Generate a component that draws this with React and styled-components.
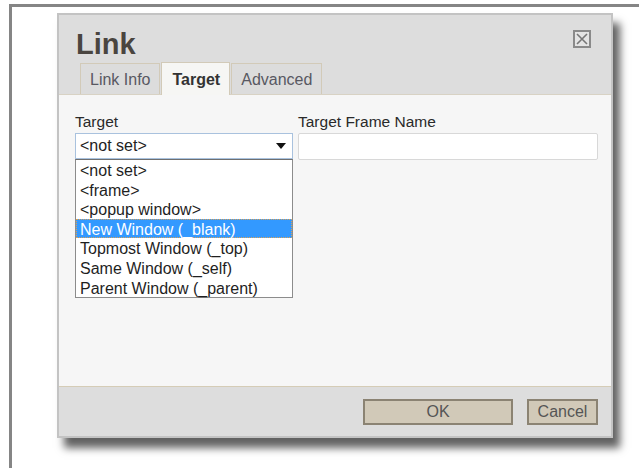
import React from 'react';
import styled, { createGlobalStyle } from 'styled-components';

const GlobalStyle = createGlobalStyle`
    html, body {
        margin: 0;
        padding: 0;
        background: #ffffff;
        overflow: hidden;
    }

    body {
        font-family: 'Liberation Sans', Arial, sans-serif;
    }
`;

const Frame = styled.div`
    margin: 4px 0 0 9px;
    height: 470px;
    border-top: 3px solid #858585;
    border-left: 3px solid #858585;
    padding: 6px 0 0 45px;
    box-sizing: border-box;
`;

const Dialog = styled.div`
    width: 556px;
    height: 425px;
    box-sizing: border-box;
    border: 2px solid #c3c3c3;
    background: #dddddd;
    display: flex;
    flex-direction: column;
    box-shadow: 7px 10px 8px rgba(0, 0, 0, 0.62);
`;

const Header = styled.div`
    display: flex;
    justify-content: space-between;
    align-items: flex-start;
    padding: 12px 20px 0 17px;
    height: 34px;
`;

const Title = styled.h1`
    margin: 0;
    font-size: 29px;
    font-weight: bold;
    line-height: 34px;
    color: #4a4540;
`;

const CloseBox = styled.button`
    width: 18px;
    height: 18px;
    margin-top: 3px;
    padding: 0;
    border: 2px solid #8a8a8a;
    background: #e4e4e4;
    display: flex;
    align-items: center;
    justify-content: center;
    box-sizing: border-box;
    cursor: pointer;
`;

const TabStrip = styled.div`
    display: flex;
    align-items: flex-end;
    gap: 1px;
    padding-left: 21px;
    height: 33px;
`;

const Tab = styled.div`
    height: ${(p) => (p.$active ? 33 : 31)}px;
    box-sizing: border-box;
    padding: 0 9px 0 ${(p) => (p.$active ? 10 : 9)}px;
    border: 1px solid #d2cab8;
    border-bottom: none;
    background: ${(p) => (p.$active ? '#f6f6f4' : '#dcdcdc')};
    color: ${(p) => (p.$active ? '#333333' : '#585862')};
    font-size: 16px;
    font-weight: ${(p) => (p.$active ? 'bold' : 'normal')};
    line-height: ${(p) => (p.$active ? 33 : 31)}px;
    margin-bottom: ${(p) => (p.$active ? -1 : 0)}px;
    position: relative;
`;

const Body = styled.div`
    flex: 1;
    background: #f6f6f6;
    border-top: 1px solid #d8d2c4;
    padding: 17px 14px 0 16px;
    display: grid;
    grid-template-columns: 218px 300px;
    column-gap: 5px;
    align-content: start;
`;

const Field = styled.div`
    display: flex;
    flex-direction: column;
`;

const Label = styled.label`
    font-size: 15.5px;
    line-height: 19px;
    color: #2a2a2a;
    margin-bottom: 2px;
`;

const SelectBox = styled.div`
    height: 26px;
    box-sizing: border-box;
    border: 1px solid #a9c2de;
    background: #ffffff;
    display: flex;
    align-items: center;
    justify-content: space-between;
    padding: 0 6px 0 4px;
    font-size: 16px;
    color: #222222;
`;

const TextInput = styled.input`
    height: 27px;
    box-sizing: border-box;
    border: 1px solid #d8d8d8;
    border-radius: 2px;
    background: #ffffff;
    font: inherit;
    margin: 0;
`;

const OptionList = styled.ul`
    list-style: none;
    margin: 0;
    padding: 0;
    border: 1px solid #8c8c8c;
    border-top-color: #6f6f6f;
    background: #ffffff;
`;

const Option = styled.li`
    height: 19.6px;
    box-sizing: border-box;
    padding: 0 3px;
    font-size: 16px;
    line-height: 19px;
    color: ${(p) => (p.$selected ? '#ffffff' : '#1f1f1f')};
    background: ${(p) => (p.$selected ? '#3399ff' : 'transparent')};
    border: 1px ${(p) => (p.$selected ? 'dotted #d9a25a' : 'solid transparent')};
    white-space: nowrap;
`;

const Footer = styled.div`
    height: 50px;
    box-sizing: border-box;
    border-top: 1px solid #d5ccb6;
    display: flex;
    justify-content: flex-end;
    align-items: flex-start;
    gap: 14px;
    padding: 12px 13px 0 0;
`;

const Button = styled.button`
    width: ${(p) => p.$width}px;
    height: 26px;
    box-sizing: border-box;
    border: 2px solid #8b8373;
    background: #d1c9b8;
    color: #555555;
    font-family: 'Liberation Sans', Arial, sans-serif;
    font-size: 16px;
    padding: 0;
    cursor: pointer;
`;

const targets = [
    '<not set>',
    '<frame>',
    '<popup window>',
    'New Window (_blank)',
    'Topmost Window (_top)',
    'Same Window (_self)',
    'Parent Window (_parent)',
];

const App = () => {
    return (
        <>
            <GlobalStyle />
            <Frame>
                <Dialog>
                    <Header>
                        <Title>Link</Title>
                        <CloseBox aria-label="Close">
                            <svg width="12" height="12" viewBox="0 0 12 12">
                                <path
                                    d="M1 1 L11 11 M11 1 L1 11"
                                    stroke="#777"
                                    strokeWidth="1.6"
                                />
                            </svg>
                        </CloseBox>
                    </Header>
                    <TabStrip>
                        <Tab>Link Info</Tab>
                        <Tab $active>Target</Tab>
                        <Tab>Advanced</Tab>
                    </TabStrip>
                    <Body>
                        <Field>
                            <Label>Target</Label>
                            <SelectBox>
                                <span>&lt;not set&gt;</span>
                                <svg width="10" height="6" viewBox="0 0 10 6">
                                    <path d="M0 0 H10 L5 6 Z" fill="#111" />
                                </svg>
                            </SelectBox>
                            <OptionList>
                                {targets.map((t) => (
                                    <Option
                                        key={t}
                                        $selected={t === 'New Window (_blank)'}
                                    >
                                        {t}
                                    </Option>
                                ))}
                            </OptionList>
                        </Field>
                        <Field>
                            <Label>Target Frame Name</Label>
                            <TextInput type="text" />
                        </Field>
                    </Body>
                    <Footer>
                        <Button $width={150}>OK</Button>
                        <Button $width={71}>Cancel</Button>
                    </Footer>
                </Dialog>
            </Frame>
        </>
    );
};

export default App;
